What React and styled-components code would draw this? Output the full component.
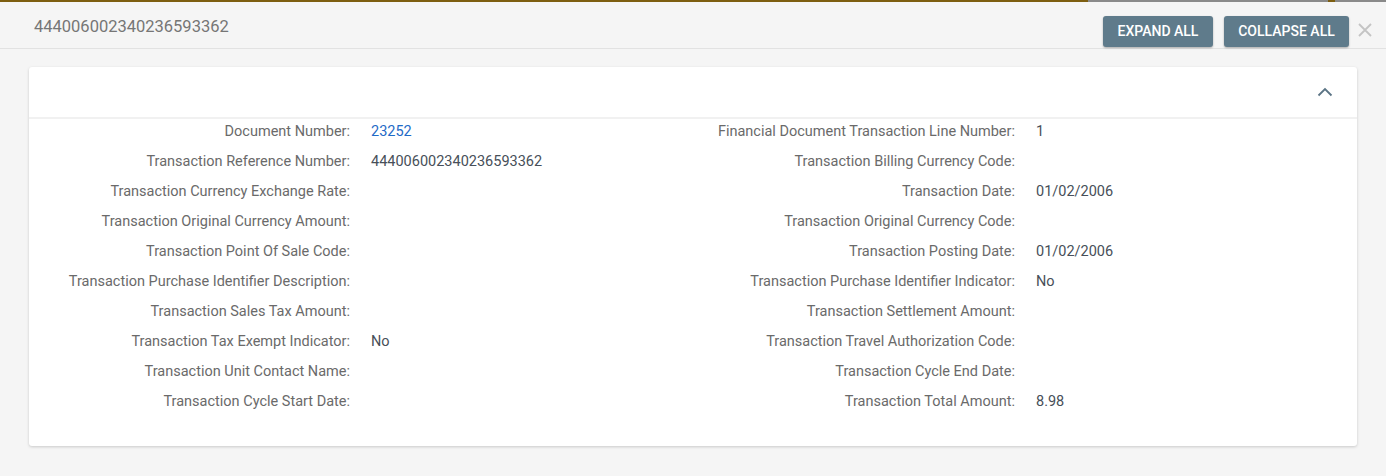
import styled, { createGlobalStyle } from "styled-components"

const GlobalStyle = createGlobalStyle`
  html, body {
    margin: 0;
    padding: 0;
    background: #f5f5f5;
    font-family: 'Roboto', 'Liberation Sans', sans-serif;
  }
`

const rows = [
  ["Document Number:", "23252", "link", "Financial Document Transaction Line Number:", "1"],
  ["Transaction Reference Number:", "444006002340236593362", "", "Transaction Billing Currency Code:", ""],
  ["Transaction Currency Exchange Rate:", "", "", "Transaction Date:", "01/02/2006"],
  ["Transaction Original Currency Amount:", "", "", "Transaction Original Currency Code:", ""],
  ["Transaction Point Of Sale Code:", "", "", "Transaction Posting Date:", "01/02/2006"],
  ["Transaction Purchase Identifier Description:", "", "", "Transaction Purchase Identifier Indicator:", "No"],
  ["Transaction Sales Tax Amount:", "", "", "Transaction Settlement Amount:", ""],
  ["Transaction Tax Exempt Indicator:", "No", "", "Transaction Travel Authorization Code:", ""],
  ["Transaction Unit Contact Name:", "", "", "Transaction Cycle End Date:", ""],
  ["Transaction Cycle Start Date:", "", "", "Transaction Total Amount:", "8.98"],
]

export default function App() {
  return (
    <>
      <GlobalStyle />
      <Backdrop>
        <Segment $w="1088px" $c="#7d5e10" />
        <Segment $w="240px" $c="#8a8a8a" />
        <Segment $w="7px" $c="#7d5e10" />
        <Segment $w="51px" $c="#8a8a8a" />
      </Backdrop>
      <Modal>
        <Header>
          <Title>444006002340236593362</Title>
          <Actions>
            <ActionButton $w="110px">EXPAND ALL</ActionButton>
            <ActionButton $w="125px">COLLAPSE ALL</ActionButton>
            <Close>
              <svg width="14" height="14" viewBox="0 0 14 14">
                <path d="M1 1 L13 13 M13 1 L1 13" stroke="#c4c4c4" strokeWidth="1.8" />
              </svg>
            </Close>
          </Actions>
        </Header>
        <Body>
          <Card>
            <CardHeader>
              <svg width="16" height="10" viewBox="0 0 16 10">
                <path d="M1.5 8.5 L8 2 L14.5 8.5" fill="none" stroke="#5b7485" strokeWidth="1.8" />
              </svg>
            </CardHeader>
            <Grid>
              {rows.map((r, i) => (
                <Row key={i}>
                  <Label>{r[0]}</Label>
                  <Value $link={r[2] === "link"}>{r[1]}</Value>
                  <Label>{r[3]}</Label>
                  <Value>{r[4]}</Value>
                </Row>
              ))}
            </Grid>
          </Card>
        </Body>
      </Modal>
    </>
  )
}

const Backdrop = styled.div`
  display: flex;
  height: 2px;
  width: 1386px;
`

const Segment = styled.div`
  width: ${p => p.$w};
  background: ${p => p.$c};
`

const Modal = styled.div`
  width: 1386px;
  height: 474px;
  background: #f5f5f5;
  display: flex;
  flex-direction: column;
`

const Header = styled.div`
  height: 46px;
  border-bottom: 1px solid #e2e2e2;
  display: flex;
  align-items: center;
  justify-content: space-between;
  padding-left: 34px;
  padding-right: 14px;
`

const Title = styled.div`
  font-size: 16.5px;
  color: #767676;
  margin-top: 2px;
`

const Actions = styled.div`
  display: flex;
  align-items: center;
  gap: 11px;
  margin-top: 12px;
`

const ActionButton = styled.button`
  width: ${p => p.$w};
  height: 31px;
  padding: 0;
  border: none;
  border-radius: 3px;
  background: #5f7b8b;
  color: #fff;
  font-family: 'Roboto', 'Liberation Sans', sans-serif;
  font-size: 14px;
  font-weight: 500;
  box-shadow: 0 1px 2px rgba(0, 0, 0, 0.3);
  cursor: pointer;
`

const Close = styled.div`
  display: flex;
  align-items: center;
  margin-left: -2px;
  margin-top: -2px;
`

const Body = styled.div`
  padding: 18px 29px 0 29px;
`

const Card = styled.div`
  background: #fff;
  border-radius: 3px;
  box-shadow: 0 1px 3px rgba(0, 0, 0, 0.18);
  height: 379px;
`

const CardHeader = styled.div`
  height: 52px;
  border-bottom: 2px solid #f1f1f1;
  display: flex;
  align-items: center;
  justify-content: flex-end;
  padding-right: 24px;
  box-sizing: border-box;
`

const Grid = styled.div`
  display: flex;
  flex-direction: column;
  padding-top: 2px;
`

const Row = styled.div`
  display: grid;
  grid-template-columns: 321px 342px 323px 1fr;
  height: 30px;
  align-items: start;
  line-height: 22px;
  font-size: 14.5px;
`

const Label = styled.div`
  text-align: right;
  color: #6a6a6a;
`

const Value = styled.div`
  padding-left: 21px;
  color: ${p => (p.$link ? "#1f6bc7" : "#474f59")};
`
